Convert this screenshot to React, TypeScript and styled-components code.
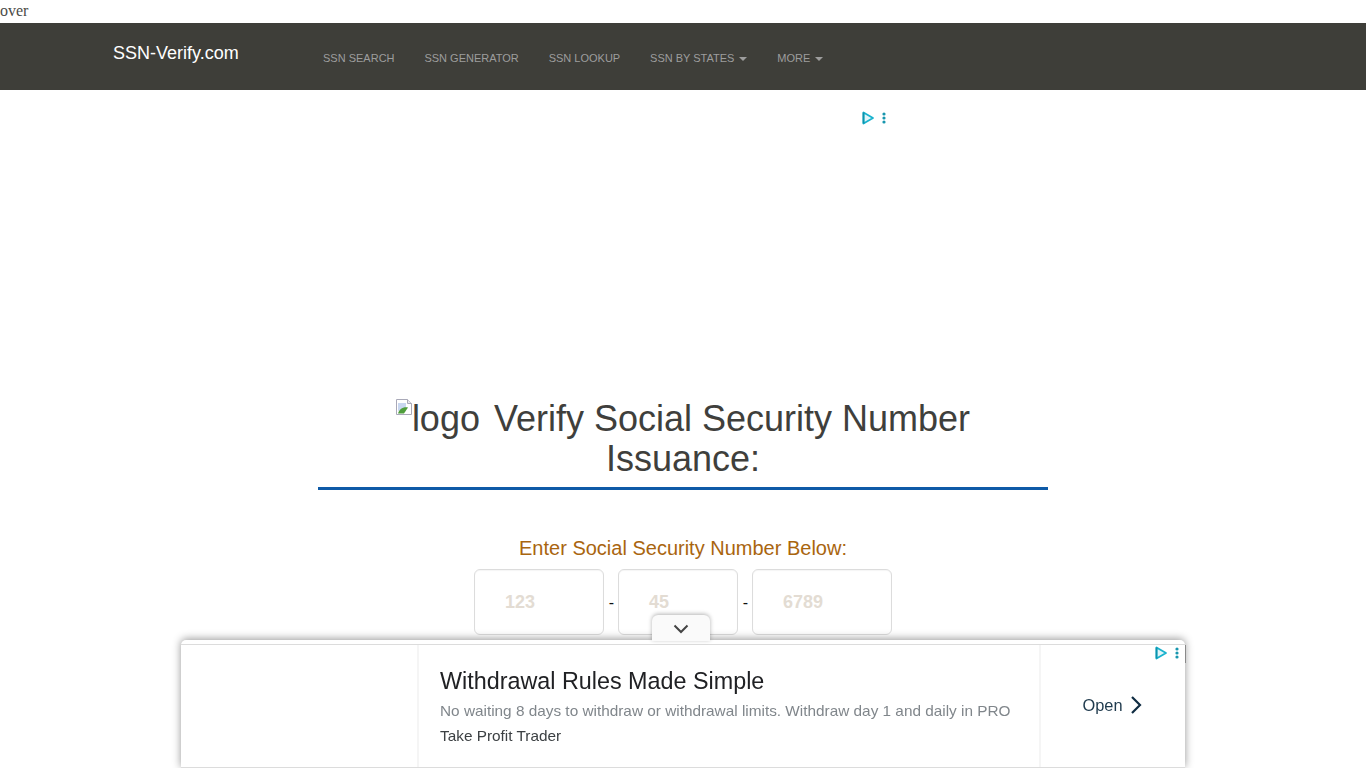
import React from "react";
import styled, { createGlobalStyle } from "styled-components";

const GlobalStyle = createGlobalStyle`
  html, body {
    margin: 0;
    padding: 0;
    background: #fff;
    overflow: hidden;
  }
  body {
    font-family: "Liberation Serif", serif;
    font-size: 16px;
    line-height: 23px;
    color: #4a4a46;
  }
`;

const TopText = styled.div`
  height: 23px;
  line-height: 22px;
`;

const Navbar = styled.nav`
  height: 67px;
  background: #3e3e39;
  display: flex;
  font-family: "Liberation Sans", Arial, sans-serif;
  padding-left: 113px;
`;

const Brand = styled.a`
  width: 195px;
  color: #fff;
  font-size: 18px;
  line-height: 20px;
  padding-top: 20px;
`;

const NavList = styled.ul`
  list-style: none;
  margin: 0;
  padding: 0;
  display: flex;
  gap: 29.9px;
  padding-left: 15px;
`;

const NavItem = styled.li`
  color: #9d9d9d;
  font-size: 11px;
  line-height: 20px;
  padding-top: 25px;
  display: flex;
  align-items: flex-start;
  gap: 5px;
`;

const Caret = styled.span`
  width: 0;
  height: 0;
  margin-top: 9px;
  border-top: 4px solid #9d9d9d;
  border-left: 4px solid transparent;
  border-right: 4px solid transparent;
`;

const AdSlot = styled.div`
  position: relative;
  height: 300px;
`;

const AdMarks = styled.div<{ $top: number; $left: number }>`
  position: absolute;
  top: ${(p) => p.$top}px;
  left: ${(p) => p.$left}px;
  display: flex;
  width: 28px;
  height: 16px;
`;

const Main = styled.main`
  width: 730px;
  margin: 0 auto;
  font-family: "Liberation Sans", Arial, sans-serif;
  text-align: center;
`;

const Heading = styled.h1`
  margin: 0;
  padding: 9px 0 8px;
  border-bottom: 3px solid #0e5aa7;
  color: #3f3f3c;
  font-size: 36px;
  font-weight: 400;
  line-height: 40px;
`;

const BrokenLogo = styled.span`
  display: inline-block;
  margin-right: 14px;
`;

const BrokenIcon = styled.svg`
  width: 16px;
  height: 16px;
  vertical-align: 16px;
`;

const Prompt = styled.h4`
  margin: 46px 0 0;
  color: #a9650f;
  font-size: 20px;
  font-weight: 400;
  line-height: 24px;
`;

const SsnRow = styled.form`
  display: flex;
  justify-content: center;
  align-items: center;
  margin-top: 9px;
`;

const SsnBox = styled.div<{ $width: number }>`
  box-sizing: border-box;
  width: ${(p) => p.$width}px;
  height: 66px;
  padding-left: 30px;
  border: 1px solid #dcdcdc;
  border-radius: 6px;
  box-shadow: inset 0 1px 1px rgba(0, 0, 0, 0.04);
  color: #e3dcd3;
  font-size: 18px;
  font-weight: 700;
  line-height: 64px;
  text-align: left;
`;

const Dash = styled.span`
  width: 14px;
  padding-left: 1px;
  box-sizing: border-box;
  color: #111;
  font-size: 16px;
  text-align: center;
`;

const Anchor = styled.aside`
  position: fixed;
  left: 181px;
  bottom: 0;
  width: 1004px;
  height: 128px;
  background: #fff;
  border-radius: 5px 5px 0 0;
  box-shadow: 0 -1px 9px rgba(0, 0, 0, 0.42);
  font-family: "Liberation Sans", Arial, sans-serif;
`;

const CollapseTab = styled.div`
  position: absolute;
  top: -25px;
  left: 471px;
  width: 58px;
  height: 26px;
  padding-top: 2px;
  box-sizing: border-box;
  display: flex;
  justify-content: center;
  align-items: center;
  background: #fafafa;
  border-radius: 6px 6px 0 0;
  box-shadow: 0 -1px 4px rgba(0, 0, 0, 0.3);
`;

const AdFrame = styled.div`
  height: 124px;
  margin-top: 4px;
  border-top: 1px solid #dcdcdc;
  border-bottom: 1px solid #dcdcdc;
  box-sizing: border-box;
  display: grid;
  grid-template-columns: 238px 1fr 146px;
`;

const AdMedia = styled.div`
  border-right: 2px solid #f5f5f5;
`;

const AdCopy = styled.div`
  padding: 21px 0 0 21px;
`;

const AdTitle = styled.div`
  color: #202124;
  font-size: 23.35px;
  line-height: 30px;
`;

const AdBody = styled.div`
  margin-top: 5px;
  color: #80868b;
  font-size: 15.35px;
  line-height: 20px;
  white-space: nowrap;
`;

const AdSource = styled.div`
  margin-top: 5px;
  color: #3c4043;
  font-size: 15.35px;
  line-height: 20px;
`;

const AdCta = styled.div`
  border-left: 2px solid #f5f5f5;
  display: flex;
  align-items: center;
  justify-content: center;
  gap: 7px;
  padding: 0 2px 2px 0;
  color: #1f3a4d;
  font-size: 16.4px;
`;

const AdEdge = styled.span`
  position: absolute;
  top: 5px;
  right: -1px;
  width: 1px;
  height: 18px;
  background: #8a8a8a;
`;

const AdChoices = ({ top, left }: { top: number; left: number }) => (
  <AdMarks $top={top} $left={left}>
    <svg width="28" height="16" viewBox="0 0 28 16" fill="none">
      <path d="M2.5 2.5v11L12 8z" fill="#e2f5f9" stroke="#19b2ce" strokeWidth="1.8" strokeLinejoin="round" />
      <path d="M2.5 2.5v11" stroke="#0c93ad" strokeWidth="1.8" />
      <circle cx="23" cy="4" r="1.6" fill="#1796ae" />
      <circle cx="23" cy="8" r="1.6" fill="#1796ae" />
      <circle cx="23" cy="12" r="1.6" fill="#1796ae" />
    </svg>
  </AdMarks>
);

const links = ["SSN SEARCH", "SSN GENERATOR", "SSN LOOKUP"];
const menus = ["SSN BY STATES", "MORE"];

export default function App() {
  return (
    <>
      <GlobalStyle />
      <TopText>over</TopText>
      <Navbar>
        <Brand>SSN-Verify.com</Brand>
        <NavList>
          {links.map((l) => (
            <NavItem key={l}>{l}</NavItem>
          ))}
          {menus.map((l) => (
            <NavItem key={l}>
              {l}
              <Caret />
            </NavItem>
          ))}
        </NavList>
      </Navbar>
      <AdSlot>
        <AdChoices top={20} left={861} />
      </AdSlot>
      <Main>
        <Heading>
          <BrokenLogo>
            <BrokenIcon viewBox="0 0 16 16">
              <path d="M.5.5h11l4 4v11H.5z" fill="#fff" stroke="#a9a9b8" />
              <path d="M11.5.5v4h4" fill="#e8e8ee" stroke="#a9a9b8" />
              <path d="M2 4h8v5l-8 3z" fill="#c9d7f0" />
              <path d="M2 14.5c1-4 5-7 10-6l-4 6z" fill="#4f9e3c" />
            </BrokenIcon>
            logo
          </BrokenLogo>
          Verify Social Security Number Issuance:
        </Heading>
        <Prompt>Enter Social Security Number Below:</Prompt>
        <SsnRow>
          <SsnBox $width={130}>123</SsnBox>
          <Dash>-</Dash>
          <SsnBox $width={120}>45</SsnBox>
          <Dash>-</Dash>
          <SsnBox $width={140}>6789</SsnBox>
        </SsnRow>
      </Main>
      <Anchor>
        <CollapseTab>
          <svg width="16" height="10" viewBox="0 0 16 10" fill="none">
            <path d="M1.5 1.5 8 8l6.5-6.5" stroke="#444" strokeWidth="2" />
          </svg>
        </CollapseTab>
        <AdFrame>
          <AdMedia />
          <AdCopy>
            <AdTitle>Withdrawal Rules Made Simple</AdTitle>
            <AdBody>No waiting 8 days to withdraw or withdrawal limits. Withdraw day 1 and daily in PRO</AdBody>
            <AdSource>Take Profit Trader</AdSource>
          </AdCopy>
          <AdCta>
            Open
            <svg width="12" height="20" viewBox="0 0 12 20" fill="none">
              <path d="M2 2l8 8-8 8" stroke="#0f2c42" strokeWidth="2.2" />
            </svg>
          </AdCta>
        </AdFrame>
        <AdEdge />
        <AdChoices top={5} left={973} />
      </Anchor>
    </>
  );
}
